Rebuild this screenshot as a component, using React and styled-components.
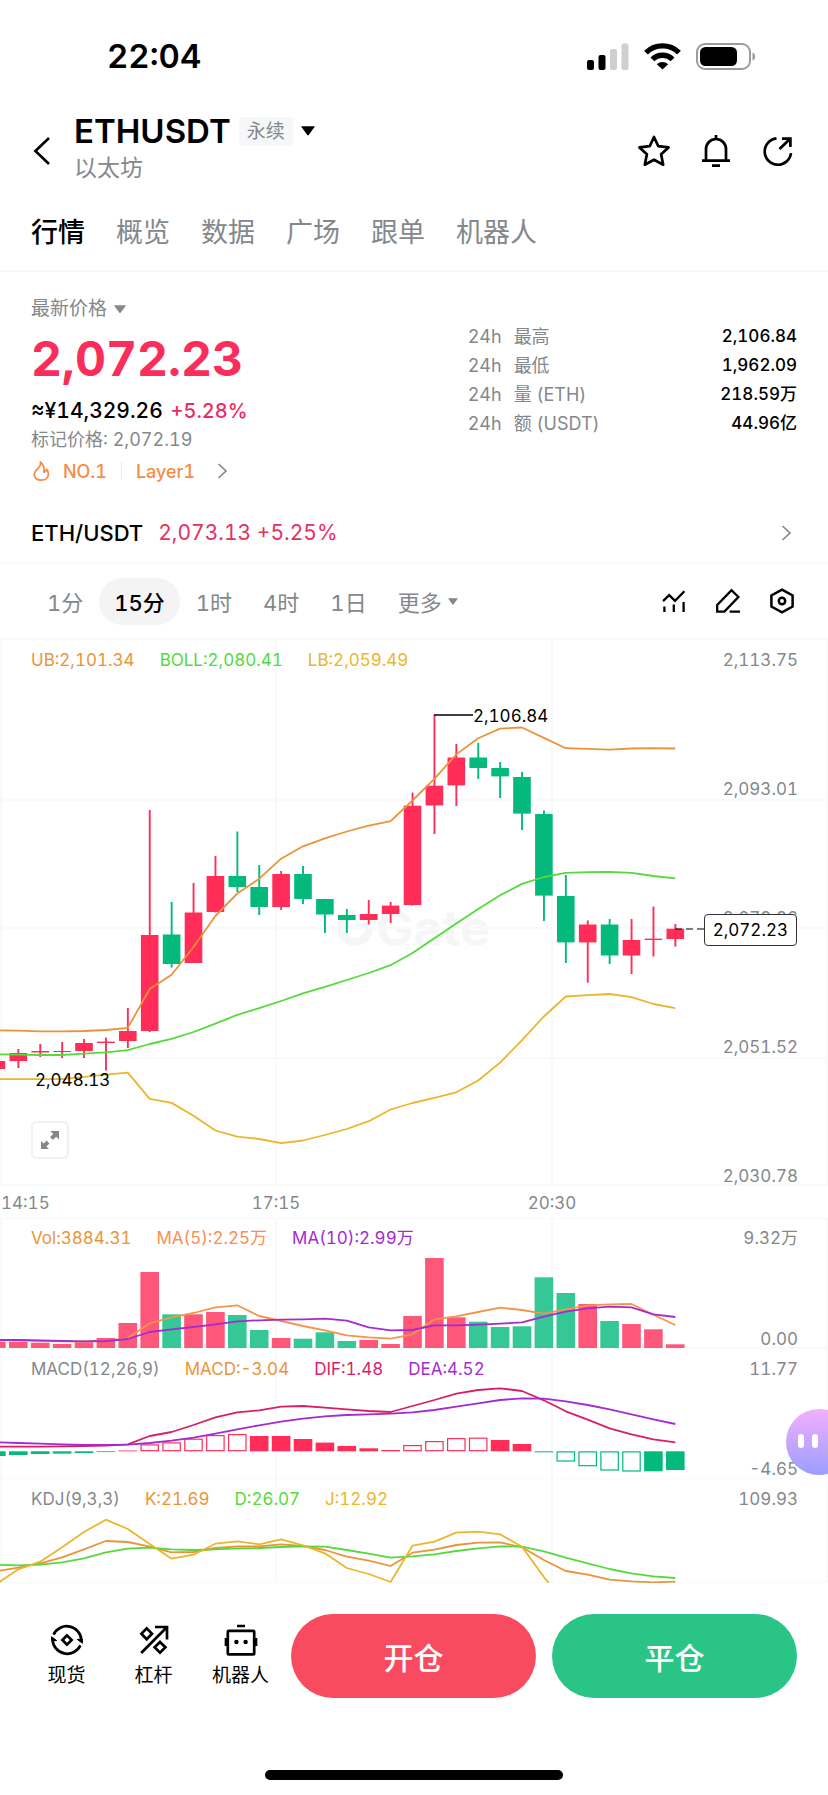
import React, { useState } from "react";
import styled, { createGlobalStyle } from "styled-components";

const RED = "#ff2d57";
const GREEN = "#03b97c";
const ORANGE = "#ea943a";
const LIME = "#55d93c";
const YELLOW = "#ecb52b";
const PURPLE = "#a42bcf";
const PINK = "#d81e6b";
const GREY = "#84888c";

const WIDTH = 828;
const STEP = 21.9;
const GRID_X = [276, 552];

// every series starts one candle left of the visible area
const xAt = (i) => -3.6 + STEP * i;

// [up, high, body top, body bottom, low]
const candles = [
  [1, 423, 423, 431, 431], [1, 411, 415, 423, 430], [1, 406, 413, 414.5, 419], [1, 404, 413, 414, 420],
  [1, 401, 405, 413, 420], [1, 399.5, 403.6, 405, 432.5], [1, 370, 393, 403, 410], [1, 172, 297, 393, 394],
  [0, 264, 296.5, 326, 329.6], [1, 245, 274.5, 325, 325], [1, 218, 238, 274, 274.5], [0, 193.5, 238, 249, 254],
  [0, 227, 249, 269, 277], [1, 233, 236, 269, 272], [0, 228, 236, 261, 266], [0, 261, 261, 276.5, 295],
  [0, 271, 277, 282, 295], [1, 262, 276, 282, 286.5], [1, 264, 267.6, 276, 285], [1, 154.6, 167.7, 267, 267.6],
  [1, 77, 147.7, 167.4, 196], [1, 106, 119.5, 147.4, 168], [0, 105, 119.5, 130, 141], [0, 124, 130, 138.4, 160],
  [0, 134, 139, 175.6, 192], [0, 172.5, 176, 257.6, 283], [0, 237, 258, 304.4, 325], [1, 282.4, 286.5, 304.4, 344.7],
  [0, 281, 286.5, 317.5, 326], [1, 281, 302, 317.5, 336], [1, 268.6, 300.6, 302, 318.6], [1, 286, 290.7, 301, 308.6],
];

const upperBand = [392.3, 392.6, 393.3, 393.3, 393, 392, 389.9, 351, 336.8, 309, 278, 255.5, 240.7, 220.7, 208.3, 200.4, 193.5, 187.7, 183.2, 162.5, 140.8, 116.4, 100.2, 90.6, 89.5, 99.9, 110.2, 110.9, 111.6, 110.5, 110.2, 110.5];
const middleBand = [416.4, 416.7, 417, 417, 415.7, 414.3, 412.2, 406, 400.9, 394, 385.7, 376.8, 370.2, 363, 355.4, 348.9, 342, 335, 327.2, 315, 300.3, 285.5, 271, 257.3, 245.9, 239, 234.9, 234.2, 233.8, 234.9, 238, 240.4];
const lowerBand = [441.2, 441.2, 441.2, 441.2, 438.8, 436.7, 434.6, 460.8, 464.9, 477.7, 492.5, 498.7, 501, 505.2, 502.5, 497, 491, 483.2, 471.5, 465, 459.8, 454.3, 442.5, 424.6, 402.2, 378.5, 358.5, 357.1, 356, 359.2, 366, 370.2];

const volumes = [6.3, 6.3, 5.3, 4, 5.7, 10, 25, 76, 33.7, 33.7, 36, 33, 18, 10, 9.3, 15.7, 7, 8, 4, 32, 90, 30.7, 26.3, 21, 21.7, 70.7, 55, 44, 27, 24, 18.7, 3.7];
const volMa5 = [122.3, 122.3, 123, 123.3, 123.3, 122.7, 120.3, 105.3, 99.3, 95, 89.3, 87.3, 98, 103, 108, 112.3, 117.3, 119.3, 120.7, 116.3, 101.3, 98.3, 94, 89.7, 92, 95.7, 91.3, 87.3, 86.3, 86, 96.7, 107];
const volMa10 = [122, 122, 122.3, 123, 123.3, 123, 121, 114, 111.3, 109, 106.3, 103.3, 102.3, 101.7, 101.3, 100.7, 102.7, 109.3, 112.3, 112, 107.3, 107.3, 106.7, 105.7, 104.3, 98.7, 93.7, 90.3, 88.7, 89.3, 96.3, 99];

const macd = [-4.7, -3.7, -2.7, -2.3, -1.7, -0.7, 0.3, 7, 9, 12.7, 16.3, 17.3, 15.3, 15.3, 12.3, 8.7, 5.3, 3, 1.3, 6.3, 10.3, 13.3, 13.7, 11.3, 7.3, -1, -10.3, -15, -19.3, -20.3, -20, -18.7];
const dif = [97.7, 97.7, 97.7, 97.3, 97, 96.7, 95.3, 87, 83, 76, 68.3, 63.3, 61.3, 57.7, 57, 58.7, 60.3, 62, 63, 57, 51, 44.7, 41, 39.3, 42, 51.3, 62.3, 70.7, 79.3, 85.3, 90.3, 93.3];
const dea = [93.3, 94, 94.7, 95.3, 96, 96, 95.7, 94, 91.7, 88.7, 84.7, 80.3, 76.3, 72.7, 69.7, 67.3, 66, 65.3, 64.7, 63.3, 61, 57.7, 54.3, 51, 49.3, 49.7, 52.3, 56, 60.3, 65.3, 70.3, 75];

const kLine = [92.3, 88.7, 84.3, 78.3, 70.3, 62, 63, 67.7, 73.3, 73, 69, 67.3, 67.3, 65.3, 67, 71, 77.7, 81.7, 87, 73.7, 70.7, 66, 63.7, 63.3, 68.3, 81, 92, 95.7, 100.7, 102.3, 103.3, 102.7];
const dLine = [85.7, 86.3, 85.7, 83.3, 79.3, 73.3, 69.7, 68.7, 70.3, 71, 70.3, 69.3, 69, 68, 67.3, 67.7, 71, 74.7, 78.7, 77.3, 75.3, 72, 69.3, 67.3, 67.7, 72.3, 78.7, 84.3, 90, 94.3, 97.3, 99];
const jLine = [105, 90.3, 82.7, 68.3, 53, 40.7, 50, 65, 79.7, 75.7, 64.7, 62.3, 65.3, 60.3, 66.3, 74.3, 89, 95, 103, 66.7, 62.7, 53.7, 52.7, 55.3, 67.7, 98, 126];

const tabs = ["行情", "概览", "数据", "广场", "跟单", "机器人"];
const frames = ["1分", "15分", "1时", "4时", "1日"];

const stats = [
  ["最高", "2,106.84"],
  ["最低", "1,962.09"],
  ["量 (ETH)", "218.59万"],
  ["额 (USDT)", "44.96亿"],
];

/* ---------- icons ---------- */

const SignalIcon = () => (
  <svg width="42" height="27" viewBox="0 0 42 27">
    <rect x="0" y="17" width="7" height="10" rx="2" />
    <rect x="11.5" y="12" width="7" height="15" rx="2" />
    <rect x="23" y="6" width="7" height="21" rx="2" fill="#cfcfcf" />
    <rect x="34.5" y="0.5" width="7" height="26.5" rx="2" fill="#cfcfcf" />
  </svg>
);

const WifiIcon = () => (
  <svg width="37" height="27" viewBox="0 0 37 27" fill="none" stroke="#000" strokeWidth="5.4">
    <path d="M2 9.6A23.6 23.6 0 0 1 35 9.6" />
    <path d="M8.4 16.4A14.2 14.2 0 0 1 28.6 16.4" />
    <path d="M18.5 26.6L12.8 21.2A8.2 8.2 0 0 1 24.2 21.2Z" fill="#000" stroke="none" />
  </svg>
);

const BatteryIcon = () => (
  <svg width="60" height="27" viewBox="0 0 60 27">
    <rect x="1" y="1" width="53" height="25" rx="8" fill="none" stroke="#9b9b9b" strokeWidth="2" />
    <rect x="4" y="4" width="37" height="19" rx="5.5" />
    <path d="M56.5 9.5C60 10.4 60 16.6 56.5 17.5Z" fill="#9b9b9b" />
  </svg>
);

const BackIcon = () => (
  <svg width="18" height="30" viewBox="0 0 18 30" fill="none" stroke="#000" strokeWidth="2.6">
    <path d="M16 2L2.4 15L16 28" />
  </svg>
);

const StarIcon = () => (
  <svg width="34" height="34" viewBox="0 0 34 34" fill="none" stroke="#000" strokeWidth="2.7" strokeLinejoin="round">
    <path d="M17 3L21.3 12.2L31.6 13.4L24.1 20.3L26.2 30.7L17 25.7L7.8 30.7L9.9 20.3L2.4 13.4L12.7 12.2Z" />
  </svg>
);

const BellIcon = () => (
  <svg width="34" height="34" viewBox="0 0 34 34" fill="none" stroke="#000" strokeWidth="2.7">
    <path d="M7 26V15A10 10 0 0 1 27 15V26M3 26.6H31M17 1V5M13 31.7H21" />
  </svg>
);

const ShareIcon = () => (
  <svg width="34" height="34" viewBox="0 0 34 34" fill="none" stroke="#000" strokeWidth="2.7">
    <path d="M15.5 4.4A13.2 13.2 0 1 0 30 19.2M18.5 15L29.2 4.8M21 4.6H29.4V13" />
  </svg>
);

const CaretIcon = ({ size = 12, color = GREY }) => (
  <svg width={size} height={size * 0.7} viewBox="0 0 12 8" fill={color}>
    <path d="M0.6 0H11.4Q12 0 11.6 0.7L6.6 7.5Q6 8.2 5.4 7.5L0.4 0.7Q0 0 0.6 0Z" />
  </svg>
);

const ChevronIcon = () => (
  <svg width="11" height="18" viewBox="0 0 11 18" fill="none" stroke={GREY} strokeWidth="1.7">
    <path d="M1.5 2L9 9L1.5 16" />
  </svg>
);

const FlameIcon = () => (
  <svg width="20" height="22" viewBox="0 0 20 22" fill="none" stroke="#f98c45" strokeWidth="1.8" strokeLinejoin="round">
    <path d="M9.4 2C10 5 9 6.8 6.4 9C4.6 10.6 3.2 12.4 3.2 14.6C3.2 18 6.4 20.2 10.2 20.2C14.2 20.2 17.4 18 17.4 14.2C17.4 12.2 16.8 10.6 15.8 9.4C15.3 10.9 14.4 11.8 12.9 12.2C13.4 8 12.6 4.4 9.4 2Z" />
  </svg>
);

const IndicatorIcon = () => (
  <svg width="26" height="26" viewBox="0 0 26 26" fill="none" stroke="#000" strokeWidth="2.3">
    <path d="M2 13.2L8.2 7.2L14 12.8L23.4 3.2M3.4 18.5V24M12.8 16.5V24M22.6 14V24" />
  </svg>
);

const PencilIcon = () => (
  <svg width="26" height="26" viewBox="0 0 26 26" fill="none" stroke="#000" strokeWidth="2.3">
    <path d="M16.6 2.2L23.4 9L9.4 23.6H2.2V17ZM14.6 23.6H25" />
  </svg>
);

const HexagonIcon = () => (
  <svg width="26" height="26" viewBox="0 0 26 26" fill="none" stroke="#000" strokeWidth="2.5">
    <path d="M13 1.6L23.6 7.4V18.6L13 24.4L2.4 18.6V7.4Z" />
    <circle cx="13" cy="13" r="3.2" />
  </svg>
);

const ExpandIcon = () => (
  <svg width="20" height="20" viewBox="0 0 20 20" fill="#85878a">
    <path d="M10.5 1H19V9.5L16.2 6.8L12.9 10L10 7.1L13.2 3.9Z" />
    <path d="M9 19H1V11L3.6 13.6L6.6 10.6L9.4 13.4L6.4 16.4Z" />
  </svg>
);

const SpotIcon = () => (
  <svg width="34" height="34" viewBox="0 0 34 34" fill="none" stroke="#000" strokeWidth="2.7">
    <path d="M3.6 11.6A14.6 14.6 0 0 1 31.4 17.6M30.4 22.4A14.6 14.6 0 0 1 2.6 16.4" />
    <path d="M27.3 16.4H32.4V20.2Z M6.7 17.6H1.6V13.8Z" fill="#000" strokeWidth="1" />
    <path d="M17 12.4L21.6 17L17 21.6L12.4 17Z" />
  </svg>
);

const LeverageIcon = () => (
  <svg width="34" height="34" viewBox="0 0 34 34" fill="none" stroke="#000" strokeWidth="2.7">
    <path d="M4.2 30L29.8 4.2M18 4H30V16.6" />
    <path d="M9.7 5.4L15 10.8L9.7 16.2L4.4 10.8Z M23 19L28.4 24.3L23 29.6L17.6 24.3Z" />
  </svg>
);

const RobotIcon = () => (
  <svg width="34" height="34" viewBox="0 0 34 34" fill="none" stroke="#000" strokeWidth="2.7">
    <rect x="3.8" y="7.8" width="26.4" height="23.6" rx="1" />
    <path d="M13 3H21M2 15V23M32 15V23" />
    <circle cx="12.4" cy="19" r="2.2" fill="#000" stroke="none" />
    <circle cx="21.6" cy="19" r="2.2" fill="#000" stroke="none" />
  </svg>
);

const WatermarkIcon = () => (
  <svg width="38" height="38" viewBox="0 0 38 38" fill="none" stroke="#f5f6f7" strokeWidth="8">
    <path d="M19 5A14 14 0 1 0 33 19" />
    <path d="M19 15H33V19H19Z" fill="#f5f6f7" stroke="none" />
  </svg>
);

/* ---------- charts ---------- */

const Line = ({ values, color }) => (
  <polyline
    points={values.map((y, i) => `${xAt(i)},${y}`).join(" ")}
    fill="none"
    stroke={color}
    strokeWidth="1.8"
    strokeLinejoin="round"
  />
);

const Plot = ({ height, lines = [], children }) => (
  <PlotSvg viewBox={`0 0 ${WIDTH} ${height}`} preserveAspectRatio="none" aria-hidden="true">
    <g stroke="#f8f9f9" strokeWidth="2">
      {lines.map((y) => <path key={y} d={`M0 ${y}H${WIDTH}`} />)}
      {GRID_X.map((x) => <path key={x} d={`M${x} 0V${height}`} />)}
      <path d={`M1 0V${height}M${WIDTH - 1} 0V${height}`} />
    </g>
    {children}
  </PlotSvg>
);

const Candles = () =>
  candles.map(([up, high, top, bottom, low], i) => (
    <g key={i} fill={up ? RED : GREEN}>
      <rect x={xAt(i) - 0.9} y={high} width="1.9" height={low - high} />
      <rect x={xAt(i) - 8.8} y={top} width="17.6" height={bottom - top} />
    </g>
  ));

const VolumeBars = () =>
  volumes.map((v, i) => (
    <rect key={i} x={xAt(i) - 9.3} y={130 - v} width="18.6" height={v} fill={candles[i][0] ? "#ff5779" : "#35c796"} />
  ));

// a bar is hollow while the histogram moves away from zero
const MacdBars = () =>
  macd.map((v, i) => {
    const hollow = i > 0 && Math.abs(v) > 2 && Math.abs(v) > Math.abs(macd[i - 1]);
    const color = v > 0 ? RED : GREEN;
    const inset = hollow ? 0.6 : 0;
    const size = Math.max(Math.abs(v), 0.8);
    return (
      <rect
        key={i}
        x={xAt(i) - 9.3 + inset}
        y={(v > 0 ? 102.3 - size : 102.3) + inset}
        width={18.6 - inset * 2}
        height={size - inset * 2}
        fill={hollow ? "#fff" : color}
        stroke={hollow ? color : "none"}
        strokeWidth="1.2"
      />
    );
  });

const App = () => {
  const [tab, setTab] = useState("行情");
  const [frame, setFrame] = useState("15分");

  return (
    <Page>
      <GlobalStyle />

      <StatusBar>
        <Clock>22:04</Clock>
        <StatusIcons>
          <SignalIcon />
          <WifiIcon />
          <BatteryIcon />
        </StatusIcons>
      </StatusBar>

      <Header>
        <IconButton aria-label="返回"><BackIcon /></IconButton>
        <Heading>
          <TitleRow>
            <h1>ETHUSDT</h1>
            <Badge>永续</Badge>
            <CaretIcon size={14} color="#000" />
          </TitleRow>
          <Subtitle>以太坊</Subtitle>
        </Heading>
        <Actions>
          <IconButton aria-label="收藏"><StarIcon /></IconButton>
          <IconButton aria-label="提醒"><BellIcon /></IconButton>
          <IconButton aria-label="分享"><ShareIcon /></IconButton>
        </Actions>
      </Header>

      <Tabs>
        {tabs.map((name) => (
          <Tab key={name} $active={name === tab} onClick={() => setTab(name)}>{name}</Tab>
        ))}
      </Tabs>

      <Summary>
        <div>
          <PriceLabel>最新价格 <CaretIcon /></PriceLabel>
          <Price>2,072.23</Price>
          <Fiat>≈¥14,329.26 <em>+5.28%</em></Fiat>
          <MarkPrice>标记价格: 2,072.19</MarkPrice>
          <Tags href="#layer1">
            <FlameIcon />
            <span>NO.1</span>
            <TagDivider />
            <span>Layer1</span>
            <ChevronIcon />
          </Tags>
        </div>
        <Stats>
          <tbody>
            {stats.map(([name, value]) => (
              <tr key={name}>
                <th scope="row"><span>24h</span>{name}</th>
                <td>{value}</td>
              </tr>
            ))}
          </tbody>
        </Stats>
      </Summary>

      <PairLink href="#spot">
        <strong>ETH/USDT</strong>
        <PairPrice>2,073.13 +5.25%</PairPrice>
        <ChevronIcon />
      </PairLink>

      <Toolbar>
        <Frames>
          {frames.map((name) => (
            <Frame key={name} $active={name === frame} onClick={() => setFrame(name)}>{name}</Frame>
          ))}
          <Frame>更多 <CaretIcon size={10} /></Frame>
        </Frames>
        <Actions>
          <IconButton aria-label="指标"><IndicatorIcon /></IconButton>
          <IconButton aria-label="画线"><PencilIcon /></IconButton>
          <IconButton aria-label="设置"><HexagonIcon /></IconButton>
        </Actions>
      </Toolbar>

      <Pane $height={548} $top={12}>
        <Watermark><WatermarkIcon />Gate</Watermark>
        <Plot height={548} lines={[1, 162, 290, 420, 547]}>
          <Candles />
          <Line values={upperBand} color={ORANGE} />
          <Line values={middleBand} color={LIME} />
          <Line values={lowerBand} color={YELLOW} />
          <path d="M434 77H473" stroke="#000" strokeWidth="1.6" />
          <path d="M675 291H704" stroke="#000" strokeWidth="1.2" strokeDasharray="7 4" />
        </Plot>
        <Legend>
          <LegendItem $color={ORANGE}>UB:2,101.34</LegendItem>
          <LegendItem $color={LIME}>BOLL:2,080.41</LegendItem>
          <LegendItem $color={YELLOW}>LB:2,059.49</LegendItem>
        </Legend>
        <Axis>
          <span>2,113.75</span>
          <span>2,093.01</span>
          <span>2,072.26</span>
          <span>2,051.52</span>
          <span>2,030.78</span>
        </Axis>
        <HighMark>2,106.84</HighMark>
        <LowMark>2,048.13</LowMark>
        <PriceTag>2,072.23</PriceTag>
        <ExpandButton aria-label="全屏"><ExpandIcon /></ExpandButton>
      </Pane>

      <TimeAxis>
        <span>14:15</span>
        <span>17:15</span>
        <span>20:30</span>
      </TimeAxis>

      <Pane $height={131} $top={10}>
        <Plot height={131} lines={[0, 130]}>
          <VolumeBars />
          <Line values={volMa5} color="#f6944c" />
          <Line values={volMa10} color={PURPLE} />
        </Plot>
        <Legend>
          <LegendItem $color={ORANGE}>Vol:3884.31</LegendItem>
          <LegendItem $color="#f98f52">MA(5):2.25万</LegendItem>
          <LegendItem $color={PURPLE}>MA(10):2.99万</LegendItem>
        </Legend>
        <Axis>
          <span>9.32万</span>
          <span>0.00</span>
        </Axis>
      </Pane>

      <Pane $height={130} $top={10}>
        <Plot height={130} lines={[130]}>
          <MacdBars />
          <Line values={dif} color={PINK} />
          <Line values={dea} color={PURPLE} />
        </Plot>
        <Legend>
          <LegendItem>MACD(12,26,9)</LegendItem>
          <LegendItem $color={ORANGE}>MACD:-3.04</LegendItem>
          <LegendItem $color={PINK}>DIF:1.48</LegendItem>
          <LegendItem $color={PURPLE}>DEA:4.52</LegendItem>
        </Legend>
        <Axis>
          <span>11.77</span>
          <span>-4.65</span>
        </Axis>
        <Assistant aria-label="助手">
          <i />
          <i />
        </Assistant>
      </Pane>

      <Pane $height={104} $top={10}>
        <Plot height={104} lines={[104]}>
          <Line values={kLine} color={ORANGE} />
          <Line values={dLine} color={LIME} />
          <Line values={jLine} color={YELLOW} />
        </Plot>
        <Legend>
          <LegendItem>KDJ(9,3,3)</LegendItem>
          <LegendItem $color={ORANGE}>K:21.69</LegendItem>
          <LegendItem $color={LIME}>D:26.07</LegendItem>
          <LegendItem $color={YELLOW}>J:12.92</LegendItem>
        </Legend>
        <Axis>
          <span>109.93</span>
        </Axis>
      </Pane>

      <BottomBar>
        <Shortcut href="#spot"><SpotIcon />现货</Shortcut>
        <Shortcut href="#margin"><LeverageIcon />杠杆</Shortcut>
        <Shortcut href="#bot"><RobotIcon />机器人</Shortcut>
        <TradeButtons>
          <TradeButton $color="#f84b60">开仓</TradeButton>
          <TradeButton $color="#2bc487">平仓</TradeButton>
        </TradeButtons>
      </BottomBar>
      <HomeIndicator />
    </Page>
  );
};

export default App;

const GlobalStyle = createGlobalStyle`
  *{
    box-sizing: border-box;
  }

  body{
    margin: 0;
    background: #fff;
    color: #000;
    font-family: Inter, "Noto Sans CJK SC", sans-serif;
    font-size: 18px;
    font-variant-numeric: tabular-nums;
  }

  button{
    padding: 0;
    border: none;
    background: none;
    color: inherit;
    font: inherit;
    font-variant-numeric: tabular-nums;
    cursor: pointer;
  }

  a{
    color: inherit;
    text-decoration: none;
  }

  svg{
    display: block;
    flex: none;
  }
`;

const Page = styled.div`
  overflow: hidden;
  padding-bottom: 15px;
`;

const StatusBar = styled.div`
  display: flex;
  align-items: center;
  justify-content: space-between;
  height: 112px;
  padding: 0 72px 0 107px;
`;

const Clock = styled.span`
  font-size: 33px;
  font-weight: 600;
`;

const StatusIcons = styled.div`
  display: flex;
  align-items: center;
  gap: 15px;
`;

const Header = styled.header`
  display: flex;
  align-items: center;
  padding: 0 33px;
`;

const IconButton = styled.button`
  display: flex;
  align-items: center;
  justify-content: center;
`;

const Heading = styled.div`
  flex: 1;
  margin: 0 0 4px 23px;
`;

const TitleRow = styled.div`
  display: flex;
  align-items: center;
  gap: 8px;
  height: 38px;

  h1{
    margin: 0;
    font-size: 33px;
    font-weight: 600;
  }
`;

const Badge = styled.span`
  padding: 0 8px;
  border-radius: 3px;
  background: #f6f7f8;
  color: ${GREY};
  font-size: 19px;
  line-height: 29px;
`;

const Subtitle = styled.div`
  color: ${GREY};
  font-size: 23px;
  line-height: 36px;
`;

const Actions = styled.div`
  display: flex;
  align-items: center;
  gap: 28px;
`;

const Tabs = styled.nav`
  display: flex;
  align-items: center;
  gap: 31px;
  height: 82px;
  padding: 0 31px;
  border-bottom: 2px solid #f6f7f8;
`;

const Tab = styled.button`
  color: ${({ $active }) => ($active ? "#000" : GREY)};
  font-size: 27px;
  font-weight: ${({ $active }) => ($active ? 500 : 400)};
`;

const Summary = styled.section`
  display: flex;
  justify-content: space-between;
  padding: 24px 31px 0;
`;

const PriceLabel = styled.div`
  display: flex;
  align-items: center;
  gap: 7px;
  color: ${GREY};
  font-size: 19px;
  line-height: 26px;
`;

const Price = styled.div`
  color: #fb2d5a;
  font-size: 48px;
  font-weight: 700;
  line-height: 74px;
`;

const Fiat = styled.div`
  font-size: 21px;
  font-weight: 500;
  line-height: 30px;

  em{
    margin-left: 2px;
    color: #ec2c5e;
    font-size: 20px;
    font-style: normal;
  }
`;

const MarkPrice = styled.div`
  color: ${GREY};
  font-size: 18px;
  line-height: 28px;
`;

const Tags = styled.a`
  display: flex;
  align-items: center;
  gap: 12px;
  height: 34px;
  color: #f98c45;
  font-weight: 500;

  svg:last-child{
    margin-left: 10px;
  }
`;

const TagDivider = styled.span`
  width: 1px;
  height: 18px;
  margin: 0 2px;
  background: #e9eaec;
`;

const Stats = styled.table`
  align-self: flex-start;
  width: 43%;
  margin-top: 26px;
  border-collapse: collapse;

  th, td{
    height: 29px;
    padding: 0;
    line-height: 29px;
  }

  th{
    color: ${GREY};
    font-weight: 400;
    text-align: left;
  }

  th span{
    margin-right: 12px;
  }

  td{
    font-size: 17px;
    font-weight: 500;
    text-align: right;
  }
`;

const PairLink = styled.a`
  display: flex;
  align-items: center;
  gap: 15px;
  height: 76px;
  padding: 15px 36px 0 31px;
  border-bottom: 2px solid #f9fafa;
  font-size: 21px;

  strong{
    font-size: 22px;
    font-weight: 500;
  }
`;

const PairPrice = styled.span`
  flex: 1;
  color: #e5315f;
`;

const Toolbar = styled.div`
  display: flex;
  align-items: center;
  justify-content: space-between;
  height: 74px;
  padding: 0 33px 0 32px;
`;

const Frames = styled.div`
  display: flex;
  gap: 1px;
`;

const Frame = styled.button`
  display: flex;
  align-items: center;
  gap: 6px;
  height: 47px;
  padding: 0 15px;
  border-radius: 24px;
  background: ${({ $active }) => ($active ? "#f4f4f5" : "none")};
  color: ${({ $active }) => ($active ? "#000" : GREY)};
  font-size: 22px;
  font-weight: ${({ $active }) => ($active ? 500 : 400)};
`;

const Pane = styled.section`
  position: relative;
  display: flex;
  justify-content: space-between;
  height: ${({ $height }) => $height}px;
  padding: ${({ $top }) => $top}px 30px 0 31px;
  font-size: 17px;
  line-height: 20px;
`;

const PlotSvg = styled.svg`
  position: absolute;
  inset: 0;
  width: 100%;
  height: 100%;
`;

const Legend = styled.div`
  position: relative;
  display: flex;
  gap: 25px;
  height: 20px;
`;

const LegendItem = styled.span`
  color: ${({ $color }) => $color || GREY};
`;

const Axis = styled.div`
  position: relative;
  display: flex;
  flex-direction: column;
  justify-content: space-between;
  color: ${GREY};
  text-align: right;
`;

const Watermark = styled.div`
  position: absolute;
  top: 270px;
  left: 336px;
  display: flex;
  align-items: center;
  gap: 2px;
  color: #f5f6f7;
  font-size: 50px;
  font-weight: 700;
  line-height: 40px;
`;

const HighMark = styled.span`
  position: absolute;
  top: 68px;
  left: 473px;
`;

const LowMark = styled(HighMark)`
  top: 432px;
  left: 35px;
`;

const PriceTag = styled.span`
  position: absolute;
  top: 276px;
  right: 31px;
  padding: 5px 8px;
  border: 1px solid #333;
  border-radius: 4px;
  background: #fff;
`;

const ExpandButton = styled.button`
  position: absolute;
  bottom: 27px;
  left: 31px;
  display: flex;
  align-items: center;
  justify-content: center;
  width: 38px;
  height: 38px;
  border: 2px solid #f1f1f2;
  border-radius: 6px;
  background: #fff;
`;

const TimeAxis = styled.div`
  display: grid;
  grid-template-columns: 1fr 2fr 2fr 1fr;
  height: 32px;
  color: ${GREY};
  font-size: 17px;
  line-height: 34px;
  text-align: center;

  span:first-child{
    padding-left: 1px;
    text-align: left;
  }
`;

const Assistant = styled.button`
  position: absolute;
  top: 60px;
  right: -24px;
  z-index: 1;
  display: flex;
  gap: 8px;
  width: 66px;
  height: 66px;
  padding: 25px 0 0 12px;
  border-radius: 33px;
  background: linear-gradient(#f2b0ff, #9b9dff);

  i{
    width: 6px;
    height: 14px;
    border-radius: 3px;
    background: #fff;
  }
`;

const BottomBar = styled.footer`
  display: flex;
  align-items: center;
  padding: 31px 31px 72px 23px;
`;

const Shortcut = styled.a`
  display: flex;
  flex-direction: column;
  align-items: center;
  gap: 5px;
  width: 87px;
  font-size: 19px;
  line-height: 28px;
`;

const TradeButtons = styled.div`
  display: flex;
  flex: 1;
  gap: 16px;
  margin-left: 7px;
`;

const TradeButton = styled.button`
  flex: 1;
  height: 84px;
  border-radius: 42px;
  background: ${({ $color }) => $color};
  color: #fff;
  font-size: 30px;
  font-weight: 500;
`;

const HomeIndicator = styled.div`
  width: 36%;
  height: 10px;
  margin: 0 auto;
  border-radius: 5px;
  background: #000;
`;
